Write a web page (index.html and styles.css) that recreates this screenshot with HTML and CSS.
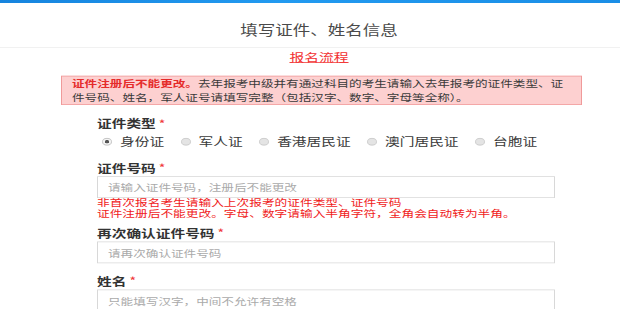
FILE: index.html
```html
<!DOCTYPE html>
<html lang="zh-CN">

<head>
    <meta charset="utf-8">
    <meta name="viewport" content="width=device-width, initial-scale=1.0">
    <title>填写证件、姓名信息</title>
    <link rel="stylesheet" href="styles.css">
</head>

<body>

    <div class="topbar"></div>

    <div class="side">
        <header>
            <h1>填写证件、姓名信息</h1>
        </header>

        <p class="flow"><a href="#">报名流程</a></p>

        <div class="notice">
            <strong>证件注册后不能更改。</strong>去年报考中级并有通过科目的考生请输入去年报考的证件类型、证<br>件号码、姓名，军人证号请填写完整（包括汉字、数字、字母等全称）。
        </div>

        <form class="skema">
            <div class="felt">
                <label>证件类型 <span class="krav">*</span></label>
                <div class="valg">
                    <label class="valgmulighed"><input type="radio" name="type" checked>身份证</label>
                    <label class="valgmulighed"><input type="radio" name="type">军人证</label>
                    <label class="valgmulighed"><input type="radio" name="type">香港居民证</label>
                    <label class="valgmulighed"><input type="radio" name="type">澳门居民证</label>
                    <label class="valgmulighed"><input type="radio" name="type">台胞证</label>
                </div>
            </div>

            <div class="felt med-hint">
                <label>证件号码 <span class="krav">*</span></label>
                <input type="text" placeholder="请输入证件号码，注册后不能更改">
                <p class="hint">非首次报名考生请输入上次报考的证件类型、证件号码<br>证件注册后不能更改。字母、数字请输入半角字符，全角会自动转为半角。</p>
            </div>

            <div class="felt">
                <label>再次确认证件号码 <span class="krav">*</span></label>
                <input type="text" placeholder="请再次确认证件号码">
            </div>

            <div class="felt sidste">
                <label>姓名 <span class="krav">*</span></label>
                <input type="text" placeholder="只能填写汉字，中间不允许有空格">
            </div>
        </form>
    </div>

</body></html>
```

FILE: styles.css
```css
html,
body {
    margin: 0;
    overflow: hidden;
    background-color: white;
}

body {
    font-family: "Noto Sans CJK SC", "Microsoft YaHei", sans-serif;
    color: #333;
}

.topbar {
    height: 3px;
    background: linear-gradient(90deg, #1684de, #229af0 45%, #1a8ee6);
}

/* skærmbilledet er presset sammen i højden */
.side {
    transform: scaleY(0.75);
    transform-origin: 0 0;
}

header {
    padding: 23px 0 12px 18px;
    border-bottom: 1px solid #ececec;
}

h1 {
    margin: 0;
    font-size: 17.5px;
    font-weight: normal;
    line-height: 24px;
    color: #4a4a4a;
    text-align: center;
}

.flow {
    margin: 0;
    padding: 2px 0 0 18px;
    font-size: 14.8px;
    line-height: 20px;
    text-align: center;
}

.flow a {
    color: #f23030;
    text-decoration: underline;
}

.notice {
    margin: 15px 38px 0 61px;
    padding: 0 10px;
    border: 1px solid #f09a9a;
    background-color: #fdd0d0;
    font-size: 12.6px;
    line-height: 18.5px;
    color: #3a3a3a;
    white-space: nowrap;
}

.notice strong {
    color: #e52b2b;
}

.skema {
    margin-left: 97px;
    width: 458px;
}

.felt {
    margin-top: 15px;
}

.felt.med-hint + .felt {
    margin-top: 11px;
}

.felt.sidste {
    margin-top: 14px;
}

.felt > label {
    display: block;
    height: 20px;
    font-size: 14.7px;
    font-weight: bold;
    line-height: 20px;
    color: #333;
}

.krav {
    color: #f03a3a;
    font-size: 12px;
    line-height: 1;
    vertical-align: 2px;
}

.valg {
    display: flex;
    gap: 16.5px;
    height: 20px;
    margin-top: 4px;
    padding-left: 5px;
}

.valgmulighed {
    display: flex;
    align-items: center;
    height: 20px;
    font-size: 14.7px;
    line-height: 20px;
    color: #3a3a3a;
}

.valgmulighed input {
    appearance: none;
    width: 10px;
    height: 10px;
    margin: 0 8px 0 0;
    border: 1px solid #c8c8c8;
    border-radius: 50%;
    background-color: #e4e4e4;
    box-sizing: border-box;
}

.valgmulighed input:checked {
    background: radial-gradient(circle, #555 0 2px, #f4f4f4 2.5px);
    border-color: #bbb;
}

.felt input[type="text"] {
    display: block;
    box-sizing: border-box;
    width: 458px;
    height: 29px;
    margin-top: 1px;
    padding: 0 10px;
    border: 1.5px solid #d8d8d8;
    font-family: inherit;
    font-size: 12.6px;
    outline: none;
}

.felt input::placeholder {
    color: #aaa;
}

.hint {
    height: 27px;
    margin: -1px 0 0;
    font-size: 12.7px;
    line-height: 13.5px;
    color: #f01c1c;
    white-space: nowrap;
}
```
